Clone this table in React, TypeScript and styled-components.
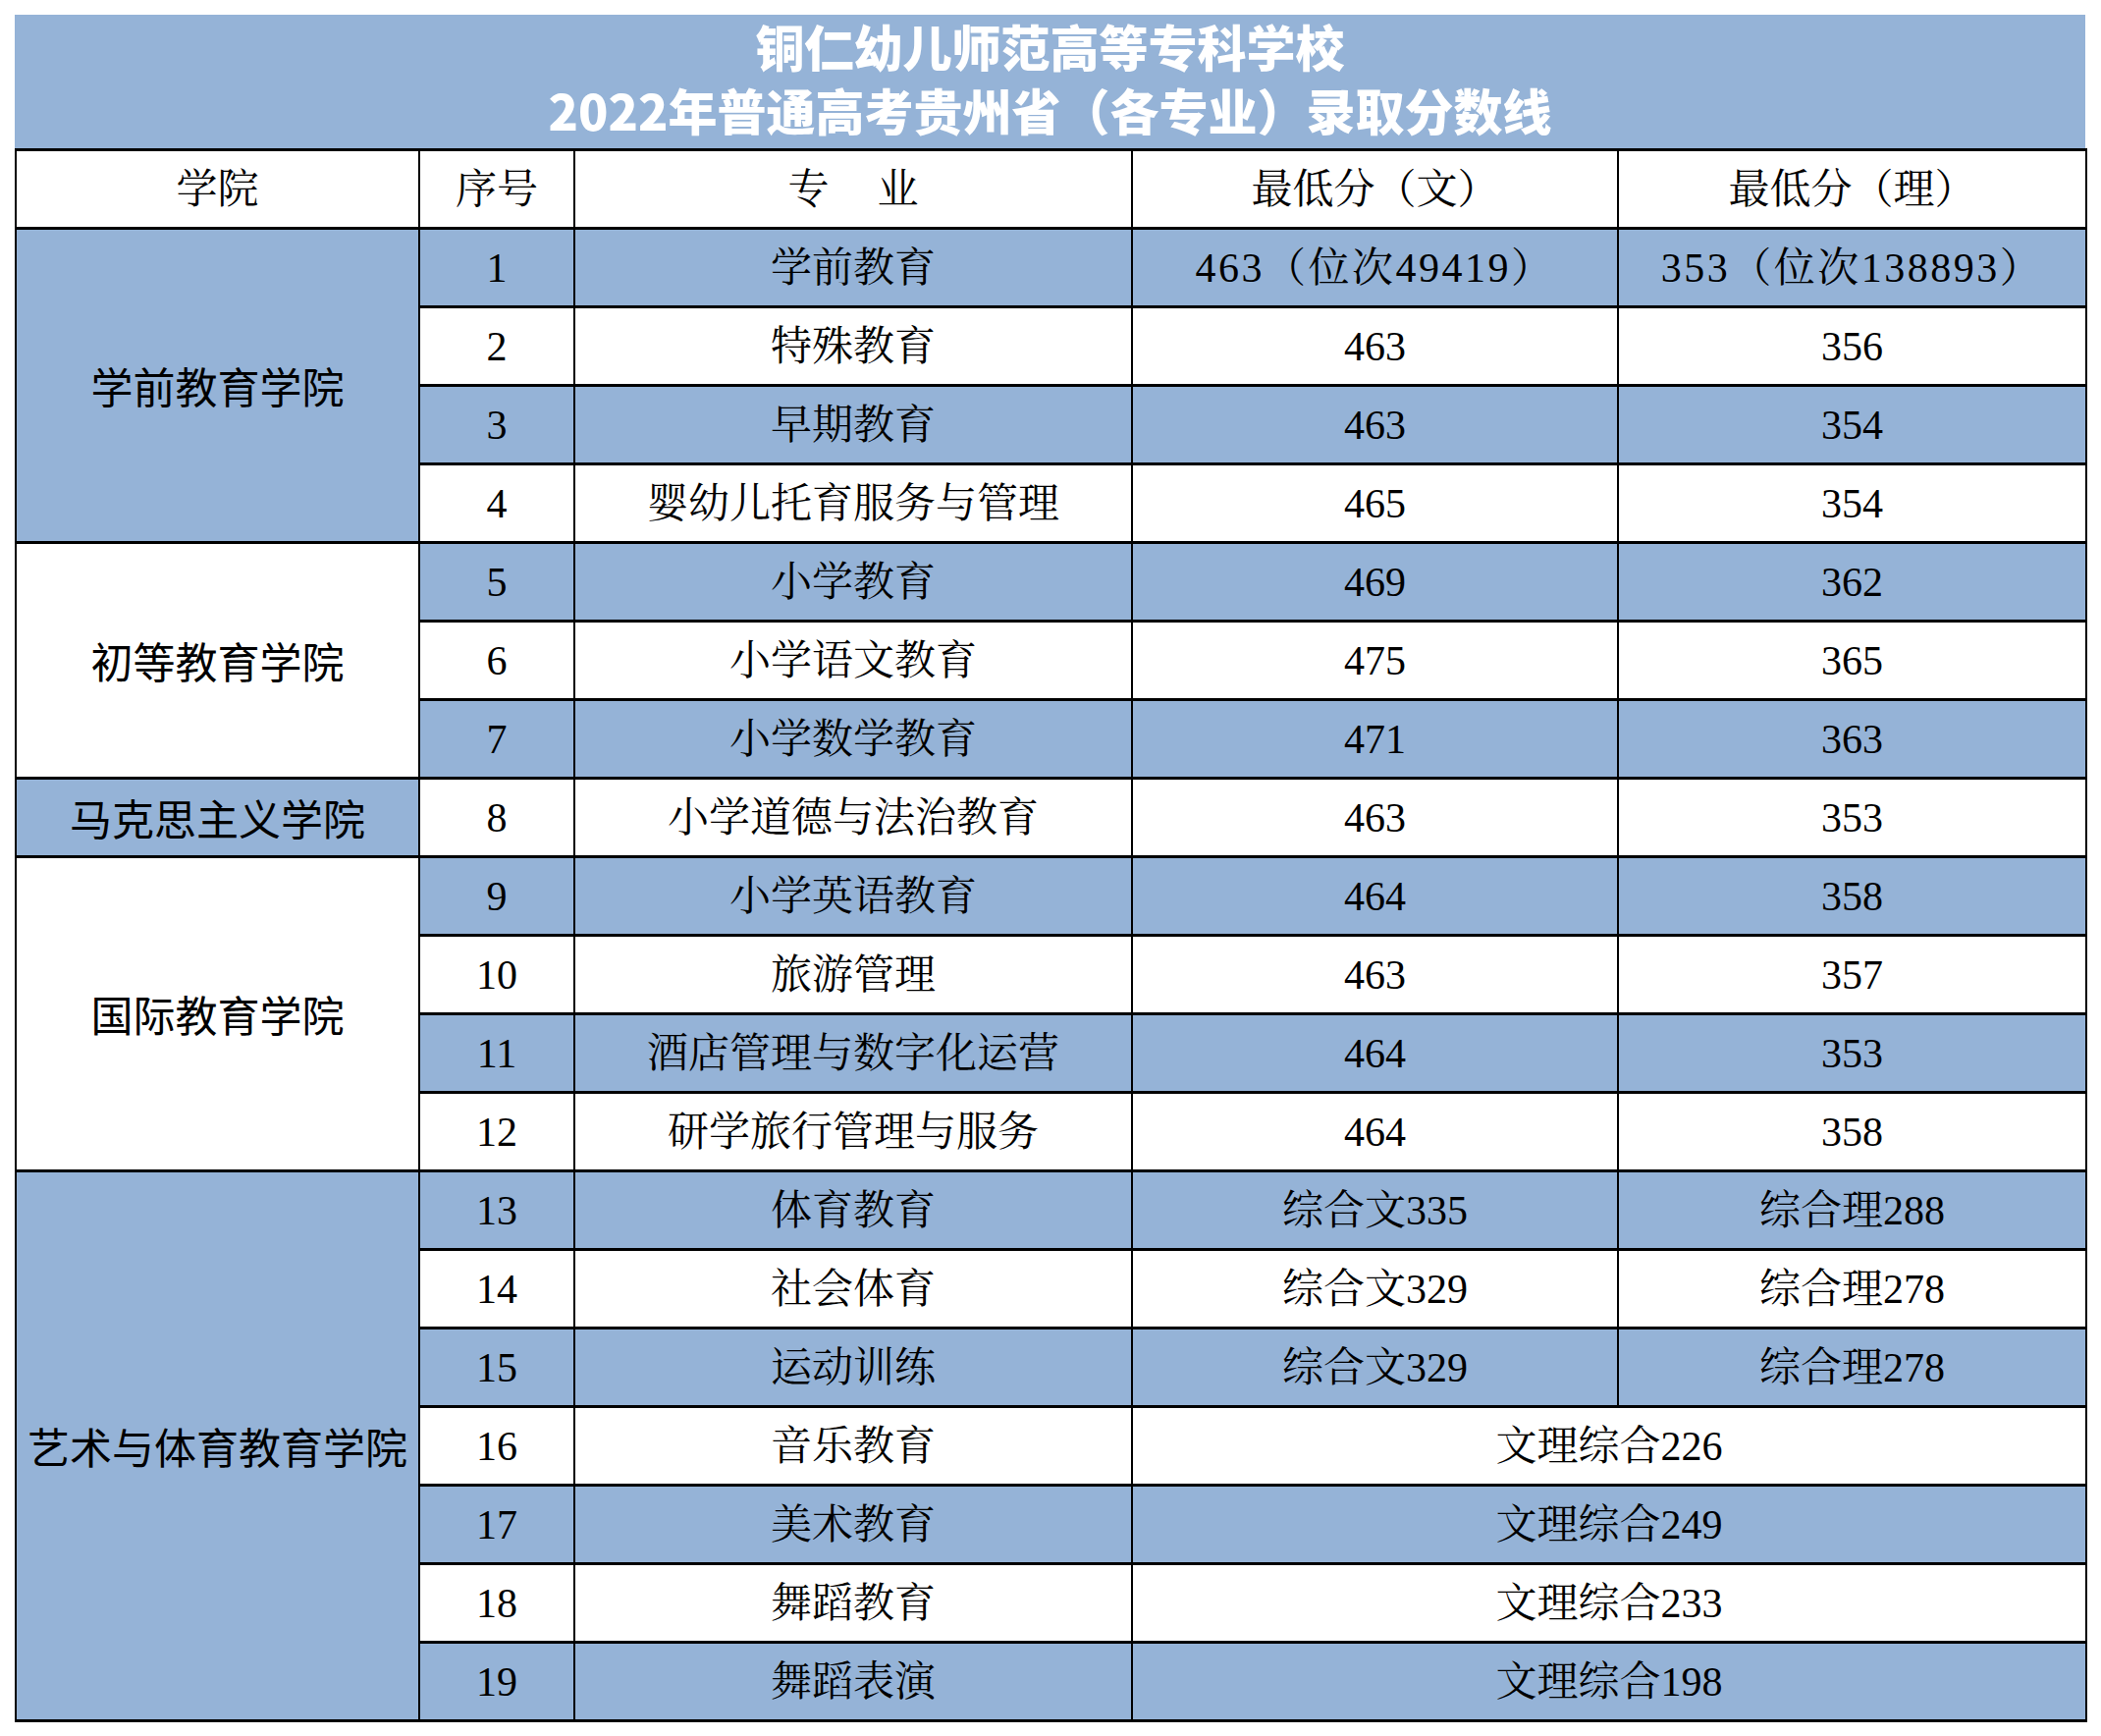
import React from "react";
import styled, { createGlobalStyle } from "styled-components";

const GlobalStyle = createGlobalStyle`
  html, body {
    margin: 0;
    padding: 0;
    background: #ffffff;
  }
  * {
    text-spacing-trim: space-all;
  }
`;

const BLUE = "#95b3d7";
const SERIF = `"Liberation Serif", "Noto Serif CJK SC", "Noto Sans CJK SC", serif`;
const SANS = `"Noto Sans CJK SC", "Noto Sans", sans-serif`;

const Page = styled.div`
  padding: 15px 16px 15px 15px;
  width: 2109px;
`;

const TitleBand = styled.div`
  height: 136px;
  box-sizing: border-box;
  padding-bottom: 8px;
  background: ${BLUE};
  display: flex;
  flex-direction: column;
  align-items: center;
  justify-content: center;
  color: #ffffff;
  font-family: "Noto Sans CJK SC", sans-serif;
  font-weight: 900;
  font-size: 50px;
  line-height: 65px;
`;

const TitleLine = styled.div`
  white-space: nowrap;
`;

const Table = styled.table`
  width: 2109px;
  border-collapse: collapse;
  table-layout: fixed;
  font-family: ${SERIF};
  font-size: 42px;
  color: #000000;
`;

const Cell = styled.td<{ $blue?: boolean; $sans?: boolean; $wide?: boolean }>`
  height: 77px;
  padding: 0;
  text-align: center;
  vertical-align: middle;
  white-space: nowrap;
  background: ${(p) => (p.$blue ? BLUE : "#ffffff")};
  border-top: 3px solid #000;
  border-bottom: 3px solid #000;
  border-left: 2px solid #000;
  border-right: 2px solid #000;
  font-family: ${(p) => (p.$sans ? SANS : SERIF)};
  font-size: ${(p) => (p.$sans ? 43 : 42)}px;
  letter-spacing: ${(p) => (p.$wide ? "2.5px" : "0")};
  line-height: 1;
`;

const Spacer = styled.span`
  display: inline-block;
  width: 49px;
`;

type Row = [number, string, string, string?];

interface Group {
  name: string;
  blue: boolean;
  rows: Row[];
}

const groups: Group[] = [
  {
    name: "学前教育学院",
    blue: true,
    rows: [
      [1, "学前教育", "463（位次49419）", "353（位次138893）"],
      [2, "特殊教育", "463", "356"],
      [3, "早期教育", "463", "354"],
      [4, "婴幼儿托育服务与管理", "465", "354"],
    ],
  },
  {
    name: "初等教育学院",
    blue: false,
    rows: [
      [5, "小学教育", "469", "362"],
      [6, "小学语文教育", "475", "365"],
      [7, "小学数学教育", "471", "363"],
    ],
  },
  {
    name: "马克思主义学院",
    blue: true,
    rows: [[8, "小学道德与法治教育", "463", "353"]],
  },
  {
    name: "国际教育学院",
    blue: false,
    rows: [
      [9, "小学英语教育", "464", "358"],
      [10, "旅游管理", "463", "357"],
      [11, "酒店管理与数字化运营", "464", "353"],
      [12, "研学旅行管理与服务", "464", "358"],
    ],
  },
  {
    name: "艺术与体育教育学院",
    blue: true,
    rows: [
      [13, "体育教育", "综合文335", "综合理288"],
      [14, "社会体育", "综合文329", "综合理278"],
      [15, "运动训练", "综合文329", "综合理278"],
      [16, "音乐教育", "文理综合226"],
      [17, "美术教育", "文理综合249"],
      [18, "舞蹈教育", "文理综合233"],
      [19, "舞蹈表演", "文理综合198"],
    ],
  },
];

export default function App() {
  return (
    <>
      <GlobalStyle />
      <Page>
        <TitleBand>
          <TitleLine>铜仁幼儿师范高等专科学校</TitleLine>
          <TitleLine>2022年普通高考贵州省（各专业）录取分数线</TitleLine>
        </TitleBand>
        <Table>
          <colgroup>
            <col style={{ width: 411 }} />
            <col style={{ width: 158 }} />
            <col style={{ width: 568 }} />
            <col style={{ width: 495 }} />
            <col style={{ width: 477 }} />
          </colgroup>
          <tbody>
            <tr>
              <Cell>学院</Cell>
              <Cell>序号</Cell>
              <Cell>
                专<Spacer />业
              </Cell>
              <Cell>最低分（文）</Cell>
              <Cell>最低分（理）</Cell>
            </tr>
            {groups.map((g) =>
              g.rows.map((r, i) => {
                const [n, major, wen, li] = r;
                const blue = n % 2 === 1;
                const wide = wen.includes("位次");
                return (
                  <tr key={n}>
                    {i === 0 && (
                      <Cell rowSpan={g.rows.length} $blue={g.blue} $sans>
                        {g.name}
                      </Cell>
                    )}
                    <Cell $blue={blue}>{n}</Cell>
                    <Cell $blue={blue}>{major}</Cell>
                    {li === undefined ? (
                      <Cell $blue={blue} colSpan={2}>
                        {wen}
                      </Cell>
                    ) : (
                      <>
                        <Cell $blue={blue} $wide={wide}>
                          {wen}
                        </Cell>
                        <Cell $blue={blue} $wide={wide}>
                          {li}
                        </Cell>
                      </>
                    )}
                  </tr>
                );
              })
            )}
          </tbody>
        </Table>
      </Page>
    </>
  );
}
